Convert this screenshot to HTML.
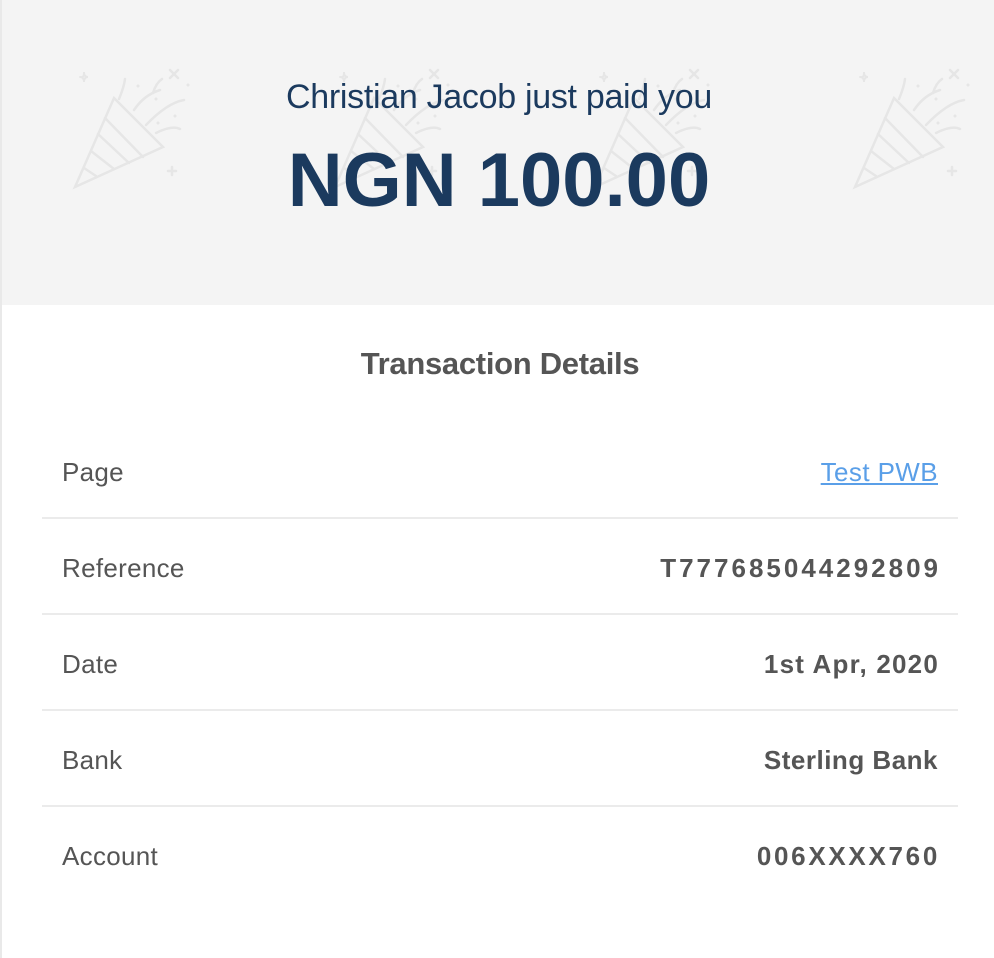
<!DOCTYPE html>
<html><head><meta charset="utf-8"><style>
html,body{margin:0;padding:0;width:994px;height:958px;background:#fff;overflow:hidden;font-family:"Liberation Sans",Arial,sans-serif}
.left{position:absolute;left:0;top:0;width:2px;height:958px;background:#e9e9e9}
.hdr{position:absolute;left:2px;top:0;width:992px;height:305px;background:#f4f4f4}
.hdr svg{position:absolute;left:-2px;top:0}
.t1{position:absolute;left:0;width:994px;top:78px;text-align:center;font-size:34px;color:#1b3a5e;letter-spacing:-0.3px}
.t2{position:absolute;left:0;width:994px;top:137px;text-align:center;font-size:76px;font-weight:bold;color:#1b3a5e}
.t3{position:absolute;left:0;width:1000px;top:346px;text-align:center;font-size:31px;font-weight:bold;color:#555;letter-spacing:-0.3px}
.row{position:absolute;left:42px;width:916px;height:96px;font-size:26px;color:#555}
.row .l{position:absolute;left:20px;top:33px;letter-spacing:0.3px}
.row .r{position:absolute;right:20px;top:33px;font-weight:bold}
.sep{position:absolute;left:42px;width:916px;height:2px;background:#ebebeb}
a{color:#5a9fe8;text-decoration:underline}
</style></head><body>
<div class="left"></div>
<div class="hdr">
<svg width="994" height="305" viewBox="0 0 994 305">
<defs>
<pattern id="p" x="72" y="65" width="260" height="240" patternUnits="userSpaceOnUse">
<g fill="none" stroke="#e6e6e6" stroke-width="2.5" stroke-linecap="round">
<path d="M3 122 L42 33 L91 82 Z"/>
<path d="M33 53 L71 92 M26 69 L57 98 M19 86 L42 104 M12 103 L24 111"/>
<path d="M47 34 Q52 22 53 14 M62 45 Q72 30 88 25 M74 60 Q95 38 112 35 M84 68 Q100 60 108 64"/>
<path d="M81 28 Q84 18 90 14"/>
<path d="M10 12 Q12 12 12 7 Q12 12 16 12 Q12 12 12 17 Q12 12 8 12" stroke-width="2"/>
<path d="M98 5 L106 13 M106 5 L98 13"/>
<path d="M100 102 L100 110 M96 106 L104 106"/>
</g>
<g fill="#e6e6e6"><circle cx="66" cy="21" r="1.5"/><circle cx="116" cy="20" r="1.5"/><circle cx="84" cy="34" r="1.5"/><circle cx="103" cy="51" r="1.5"/><circle cx="86" cy="58" r="1.5"/></g>
</pattern></defs>
<rect width="994" height="305" fill="url(#p)"/>
</svg>
<div class="t1">Christian Jacob just paid you</div>
<div class="t2">NGN 100.00</div>
</div>
<div class="t3">Transaction Details</div>
<div class="row" style="top:424px"><span class="l">Page</span><span class="r" style="font-weight:normal;letter-spacing:0.4px"><a>Test PWB</a></span></div>
<div class="sep" style="top:517px"></div>
<div class="row" style="top:520px"><span class="l">Reference</span><span class="r" style="letter-spacing:3px;right:17px">T777685044292809</span></div>
<div class="sep" style="top:613px"></div>
<div class="row" style="top:616px"><span class="l">Date</span><span class="r" style="letter-spacing:1.2px;right:19px">1st Apr, 2020</span></div>
<div class="sep" style="top:709px"></div>
<div class="row" style="top:712px"><span class="l">Bank</span><span class="r" style="letter-spacing:0.5px;right:20px">Sterling Bank</span></div>
<div class="sep" style="top:805px"></div>
<div class="row" style="top:808px"><span class="l">Account</span><span class="r" style="letter-spacing:2.7px;right:18px">006XXXX760</span></div>
</body></html>
